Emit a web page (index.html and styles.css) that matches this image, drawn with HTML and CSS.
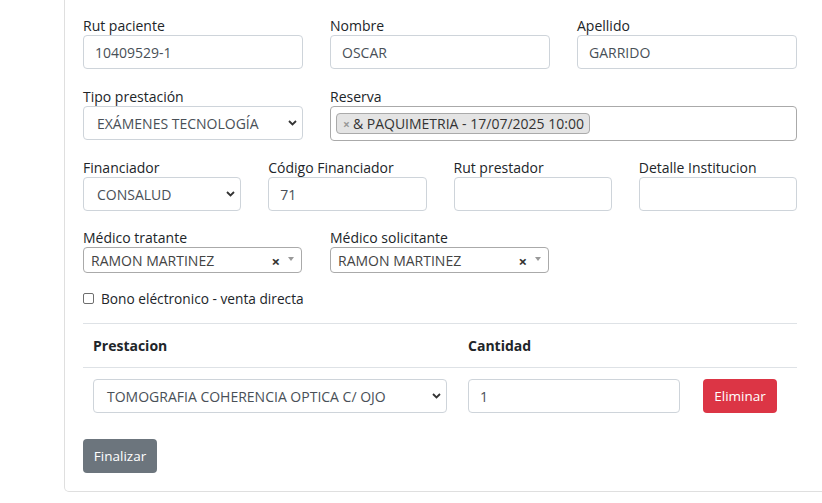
FILE: index.html
```html
<!DOCTYPE html>
<html lang="es">
<head>
<meta charset="utf-8">
<title>Prestación</title>
<link rel="stylesheet" href="styles.css">
</head>
<body>
<div class="page">
  <div class="card">
    <div class="row cols-3">
      <div class="field">
        <label>Rut paciente</label>
        <div class="form-control">10409529-1</div>
      </div>
      <div class="field">
        <label>Nombre</label>
        <div class="form-control">OSCAR</div>
      </div>
      <div class="field">
        <label>Apellido</label>
        <div class="form-control">GARRIDO</div>
      </div>
    </div>

    <div class="row cols-2">
      <div class="field">
        <label>Tipo prestación</label>
        <div class="form-select">EXÁMENES TECNOLOGÍA</div>
      </div>
      <div class="field">
        <label>Reserva</label>
        <div class="s2-multi">
          <span class="s2-chip"><span class="s2-chip-x">×</span>&amp; PAQUIMETRIA - 17/07/2025 10:00</span>
        </div>
      </div>
    </div>

    <div class="row cols-4">
      <div class="field">
        <label>Financiador</label>
        <div class="form-select">CONSALUD</div>
      </div>
      <div class="field">
        <label>Código Financiador</label>
        <div class="form-control">71</div>
      </div>
      <div class="field">
        <label>Rut prestador</label>
        <div class="form-control"></div>
      </div>
      <div class="field">
        <label>Detalle Institucion</label>
        <div class="form-control"></div>
      </div>
    </div>

    <div class="row cols-3">
      <div class="field">
        <label>Médico tratante</label>
        <div class="s2-single"><span class="s2-text">RAMON MARTINEZ</span><span class="s2-clear">×</span><span class="s2-arrow"></span></div>
      </div>
      <div class="field">
        <label>Médico solicitante</label>
        <div class="s2-single"><span class="s2-text">RAMON MARTINEZ</span><span class="s2-clear">×</span><span class="s2-arrow"></span></div>
      </div>
    </div>

    <div class="check">
      <span class="check-box"></span>
      <span class="check-label">Bono eléctronico - venta directa</span>
    </div>

    <table class="table">
      <thead>
        <tr>
          <th class="c1">Prestacion</th>
          <th class="c2">Cantidad</th>
          <th class="c3"></th>
        </tr>
      </thead>
      <tbody>
        <tr>
          <td class="c1"><div class="form-select wide">TOMOGRAFIA COHERENCIA OPTICA C/ OJO</div></td>
          <td class="c2"><div class="form-control qty">1</div></td>
          <td class="c3"><button class="btn btn-danger">Eliminar</button></td>
        </tr>
      </tbody>
    </table>

    <button class="btn btn-secondary">Finalizar</button>
  </div>
</div>
</body>
</html>
```

FILE: styles.css
```css
html, body {
  margin: 0;
  padding: 0;
}

body {
  font-family: "Open Sans", "Noto Sans", sans-serif;
  font-size: 14px;
  color: #212529;
  background: #ffffff;
}

.page {
  width: 822px;
  height: 503px;
  overflow: hidden;
}

.card {
  margin-left: 64px;
  width: 714px;
  padding: 14px 80px 18px 18px;
  border: 1px solid #dfdfdf;
  border-top: 0;
  border-radius: 0 0 0 5px;
}

.row {
  display: grid;
  column-gap: 27px;
}

.cols-3 {
  grid-template-columns: 220px 220px 220px;
  margin-bottom: 16px;
}

.cols-2 {
  grid-template-columns: 220px 1fr;
  margin-bottom: 15px;
}

.cols-4 {
  grid-template-columns: repeat(4, 1fr);
  margin-bottom: 15px;
}

.cols-3 + .check {
  margin-top: -1px;
}

.field label {
  display: block;
  box-sizing: border-box;
  padding-top: 1px;
  line-height: 21px;
  height: 21px;
}

.form-control,
.form-select {
  box-sizing: border-box;
  height: 34px;
  line-height: 32px;
  padding: 1px 11px 0;
  border: 1px solid #ced4da;
  border-radius: 4px;
  color: #495057;
  white-space: nowrap;
  overflow: hidden;
}

.form-select {
  padding-left: 13px;
  background-image: url("data:image/svg+xml,%3Csvg xmlns='http://www.w3.org/2000/svg' width='9' height='6' viewBox='0 0 9 6'%3E%3Cpolyline points='1,1 4.5,4.5 8,1' fill='none' stroke='%23333' stroke-width='1.8'/%3E%3C/svg%3E");
  background-repeat: no-repeat;
  background-position: right 5px center;
  background-size: 9px 6px;
}

/* select2 multiple */
.s2-multi {
  box-sizing: border-box;
  height: 35px;
  border: 1px solid #aaaaaa;
  border-radius: 4px;
  padding: 6px 5px;
  display: flex;
  align-items: flex-start;
}

.s2-chip {
  box-sizing: border-box;
  height: 21px;
  line-height: 20px;
  background: #e4e4e4;
  border: 1px solid #aaaaaa;
  border-radius: 4px;
  padding: 0 5px 0 6px;
  color: #333;
  white-space: nowrap;
}

.s2-chip-x {
  color: #999999;
  font-weight: bold;
  font-size: 12px;
  margin-right: 3px;
}

/* select2 single */
.s2-single {
  box-sizing: border-box;
  width: 219px;
  height: 26px;
  border: 1px solid #aaaaaa;
  border-radius: 4px;
  display: flex;
  align-items: center;
  padding-left: 7px;
  padding-top: 1px;
  color: #444444;
}

.s2-text {
  flex: 1;
  white-space: nowrap;
}

.s2-clear {
  font-weight: bold;
  font-size: 15px;
  color: #333;
  margin-right: 8px;
}

.s2-arrow {
  width: 0;
  height: 0;
  border-style: solid;
  border-width: 4px 3px 0 3px;
  border-color: #999999 transparent transparent transparent;
  margin-right: 7px;
  margin-top: -4px;
}

/* checkbox */
.check {
  display: flex;
  align-items: center;
  height: 21px;
  margin-top: 15px;
}

.check-box {
  box-sizing: border-box;
  width: 11px;
  height: 11px;
  border: 1px solid #6e6e6e;
  border-radius: 2px;
  margin-right: 7px;
}

.check-label {
  font-size: 13.7px;
}

/* table */
.table {
  border-collapse: collapse;
  width: 714px;
  margin-top: 14px;
}

.table th {
  text-align: left;
  font-weight: 700;
  padding: 11px 10px;
  line-height: 21px;
  border-top: 1px solid #dee2e6;
  border-bottom: 1px solid #dee2e6;
}

.table td {
  padding: 11px 10px;
  vertical-align: top;
}

.c1 { width: 355px; }
.c2 { width: 215px; }

.wide { width: 354px; }
.qty { width: 212px; }

.btn {
  box-sizing: border-box;
  height: 34px;
  width: 74px;
  padding: 0;
  border: 0;
  border-radius: 4px;
  font-family: inherit;
  font-size: 13.5px;
  color: #ffffff;
  display: inline-block;
  text-align: center;
}

.btn-danger {
  background: #dc3545;
}

.btn-secondary {
  background: #6c757d;
  margin-top: 15px;
  display: block;
}
```
